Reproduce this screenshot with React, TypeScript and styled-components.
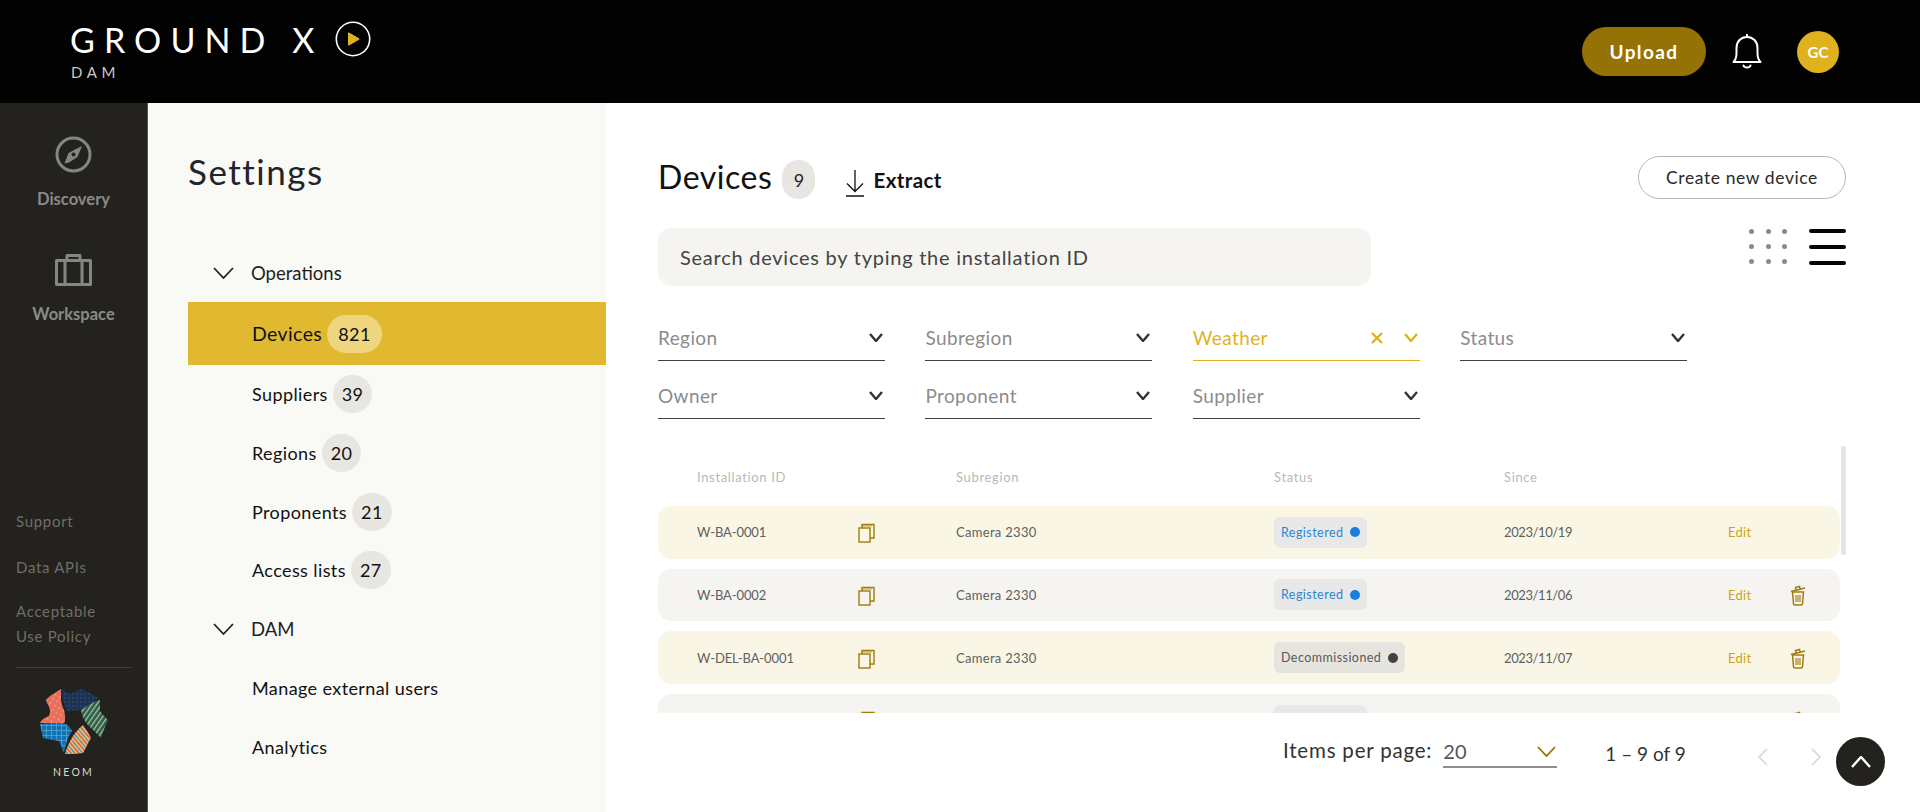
import { FC } from "react";
import styled, { createGlobalStyle } from "styled-components";

const GlobalStyle = createGlobalStyle`
	html, body {
		margin: 0;
		padding: 0;
		background: #fff;
		font-family: "Lato", "Noto Sans", sans-serif;
		overflow: hidden;
	}
	* { box-sizing: border-box; }
`;

const Page = styled.div`
	width: 1920px;
	height: 812px;
	display: flex;
	flex-direction: column;
	position: relative;
	overflow: hidden;
`;

const Header = styled.header`
	height: 103px;
	background: #020202;
	display: flex;
	align-items: center;
	justify-content: space-between;
	padding: 0 81px 0 70px;
	flex-shrink: 0;
`;

const Brand = styled.div`
	display: flex;
	flex-direction: column;
`;

const BrandTop = styled.div`
	display: flex;
	align-items: center;
	gap: 21px;
	height: 36px;
`;

const BrandName = styled.span`
	color: #fff;
	font-size: 34px;
	letter-spacing: 9.1px;
	margin-right: -9.1px;
	line-height: 36px;
`;

const PlayWrap = styled.span`
	display: flex;
	margin-bottom: 2px;
`;

const BrandSub = styled.span`
	color: #c9c9c9;
	font-size: 15px;
	letter-spacing: 4.6px;
	line-height: 18px;
	margin: 5px 0 0 1px;
`;

const HeaderActions = styled.div`
	display: flex;
	align-items: center;
`;

const UploadButton = styled.button`
	width: 124px;
	height: 49px;
	border: 0;
	border-radius: 25px;
	background: #957206;
	color: #fff;
	font: 700 19px "Lato", sans-serif;
	letter-spacing: 1.4px;
`;

const BellWrap = styled.span`
	display: flex;
	margin: 0 35px 0 26px;
`;

const Avatar = styled.span`
	width: 42px;
	height: 42px;
	border-radius: 50%;
	background: #dfb21d;
	color: #fff;
	font-weight: 700;
	font-size: 15px;
	display: flex;
	align-items: center;
	justify-content: center;
`;

const Body = styled.div`
	flex: 1;
	display: flex;
	min-height: 0;
`;

const Rail = styled.nav`
	width: 148px;
	background: #23221e;
	border-right: 1px solid #55544f;
	display: flex;
	flex-direction: column;
	align-items: stretch;
	flex-shrink: 0;
`;

const RailItem = styled.div<{ $top: number; $gap: number }>`
	display: flex;
	flex-direction: column;
	align-items: center;
	gap: ${(p) => p.$gap}px;
	margin-top: ${(p) => p.$top}px;
	color: #8a8a87;
	font-weight: 700;
	font-size: 16.5px;
	line-height: 18px;
`;

const RailLinks = styled.div`
	margin-top: auto;
	padding: 0 16px;
	display: flex;
	flex-direction: column;
	color: #6f6e69;
	font-size: 15px;
	letter-spacing: 0.7px;
`;

const RailLink = styled.span`
	margin-bottom: 21px;
	line-height: 25px;
	&:nth-child(2) { margin-bottom: 19px; }
	&:last-child { margin-bottom: 18px; }
`;

const RailDivider = styled.div`
	margin: 0 16px;
	border-top: 1px solid #3d3c37;
`;

const NeomBlock = styled.div`
	display: flex;
	flex-direction: column;
	align-items: center;
	padding: 20px 0 33px;
`;

const NeomText = styled.span`
	color: #d8d8d4;
	font-size: 10.5px;
	letter-spacing: 2.2px;
	margin-top: 11px;
	line-height: 13px;
`;

const SettingsPanel = styled.aside`
	width: 458px;
	background: #f9f9f5;
	padding-top: 46px;
	flex-shrink: 0;
`;

const SettingsTitle = styled.h1`
	margin: 0 0 50px 40px;
	font-size: 35px;
	line-height: 44px;
	font-weight: 400;
	letter-spacing: 1.5px;
	color: #22242b;
`;

const GroupRow = styled.div`
	display: flex;
	align-items: center;
	height: 59px;
	padding-left: 65px;
	gap: 17px;
	font-size: 18.5px;
	color: #1e1e1e;
`;

const MenuRow = styled.div<{ $active?: boolean }>`
	display: flex;
	align-items: center;
	height: ${(p) => (p.$active ? 63 : 58.7)}px;
	margin-left: 40px;
	padding-left: 64px;
	gap: 5px;
	font-size: ${(p) => (p.$active ? 19.5 : 18)}px;
	letter-spacing: 0.4px;
	color: #111;
	background: ${(p) => (p.$active ? "#e0b930" : "transparent")};
`;

const MenuCount = styled.span<{ $active?: boolean }>`
	min-width: 38px;
	height: 38px;
	padding: 0 ${(p) => (p.$active ? 11 : 9)}px;
	border-radius: 19px;
	background: ${(p) => (p.$active ? "#eed67f" : "#e8e6e1")};
	display: flex;
	align-items: center;
	justify-content: center;
	font-size: 18px;
`;

const Main = styled.main`
	flex: 1;
	padding: 53px 74px 0 52px;
	min-width: 0;
`;

const TitleRow = styled.div`
	display: flex;
	align-items: center;
	height: 43px;
`;

const PageTitle = styled.h2`
	margin: 0;
	font-weight: 400;
	font-size: 32px;
	letter-spacing: 0.55px;
	color: #111;
	line-height: 43px;
	position: relative;
	top: -1px;
`;

const TitleCount = styled.span`
	width: 33px;
	height: 39px;
	margin: 4px 0 0 10px;
	border-radius: 17px;
	background: #e8e6e1;
	display: flex;
	align-items: center;
	justify-content: center;
	font-size: 18px;
	color: #222;
`;

const ExtractLink = styled.span`
	display: flex;
	align-items: center;
	gap: 8px;
	margin: 4px 0 0 30px;
	font-size: 20.5px;
	font-weight: 700;
	letter-spacing: 0.4px;
	color: #111;
`;

const ExtractIcon = styled.span`
	display: flex;
	padding-top: 8px;
`;

const CreateButton = styled.button`
	margin-left: auto;
	width: 208px;
	height: 43px;
	border: 1px solid #b5b5b0;
	border-radius: 22px;
	background: #fff;
	font: 400 17.5px "Lato", sans-serif;
	letter-spacing: 0.6px;
	color: #2a2a2a;
`;

const SearchRow = styled.div`
	display: flex;
	justify-content: space-between;
	margin-top: 29px;
`;

const SearchBox = styled.div`
	width: 713px;
	height: 58px;
	border-radius: 13px;
	background: #f5f4f0;
	padding-left: 22px;
	display: flex;
	align-items: center;
	font-size: 20px;
	letter-spacing: 0.75px;
	color: #444;
`;

const ViewSwitch = styled.div`
	display: flex;
	gap: 22px;
	padding-top: 1px;
	height: 37px;
`;

const DotGrid = styled.div`
	display: grid;
	grid-template-columns: repeat(3, 5px);
	grid-template-rows: repeat(3, 5px);
	justify-content: space-between;
	align-content: space-between;
	width: 38px;
	height: 35px;
`;

const Dot = styled.span`
	width: 5px;
	height: 5px;
	border-radius: 50%;
	background: #8a8a8a;
`;

const Burger = styled.div`
	display: flex;
	flex-direction: column;
	justify-content: space-between;
	width: 37px;
	height: 36px;
`;

const BurgerLine = styled.span`
	height: 4px;
	border-radius: 2px;
	background: #050505;
`;

const Filters = styled.div`
	display: grid;
	grid-template-columns: repeat(4, 227px);
	column-gap: 40.4px;
	row-gap: 10px;
	margin-top: 27px;
`;

const FilterField = styled.div<{ $active?: boolean }>`
	height: 48px;
	display: flex;
	align-items: center;
	gap: 21px;
	padding: 2px 2px 0 0;
	border-bottom: 1px solid ${(p) => (p.$active ? "#dfb21d" : "#3f3f3f")};
	color: ${(p) => (p.$active ? "#dfb21d" : "#8c8c8c")};
	font-size: 19px;
	letter-spacing: 0.4px;
`;

const FilterLabel = styled.span`
	flex: 1;
`;

const TableArea = styled.div`
	position: relative;
	margin-top: 27px;
	height: 267px;
	overflow: hidden;
`;

const ScrollThumb = styled.span`
	position: absolute;
	right: 0;
	top: 0;
	width: 5px;
	height: 109px;
	border-radius: 3px;
	background: #e6e4df;
`;

const tableColumns = "161px 98px 318px 230px 224px 62px 1fr";

const TableHead = styled.div`
	display: grid;
	grid-template-columns: ${tableColumns};
	height: 60px;
	width: 1182px;
	padding: 24px 0 0 39px;
	font-size: 13px;
	line-height: 14px;
	letter-spacing: 0.65px;
	color: #b9b9b6;
`;

const HeadCell = styled.span<{ $span?: number }>`
	grid-column: span ${(p) => p.$span ?? 1};
`;

const Rows = styled.div`
	display: flex;
	flex-direction: column;
	gap: 10px;
	width: 1182px;
`;

const Row = styled.div<{ $tone: "cream" | "grey" }>`
	display: grid;
	grid-template-columns: ${tableColumns};
	align-items: center;
	height: 52.67px;
	flex-shrink: 0;
	padding-left: 39px;
	border-radius: 13px;
	background: ${(p) => (p.$tone === "cream" ? "#f9f6e6" : "#f5f4f0")};
	font-size: 13px;
	letter-spacing: 0.3px;
	color: #5f5f5f;
`;

const CodeCell = styled.span`
	letter-spacing: -0.1px;
`;

const DateCell = styled.span`
	letter-spacing: -0.4px;
`;

const IconCell = styled.span`
	display: flex;
	align-items: center;
	padding-top: 2px;
`;

const EditLink = styled.span`
	color: #c9a521;
	font-size: 13px;
`;

const StatusPill = styled.span<{ $kind: "registered" | "decommissioned" }>`
	display: inline-flex;
	align-items: center;
	justify-content: space-between;
	justify-self: start;
	gap: 7px;
	min-width: 93px;
	height: 31px;
	padding: 0 7px;
	border-radius: 6px;
	font-size: 12.5px;
	letter-spacing: 0.45px;
	background: ${(p) => (p.$kind === "registered" ? "#e9e8e8" : "#e6e4df")};
	color: ${(p) => (p.$kind === "registered" ? "#2a86d6" : "#5a5a5a")};
`;

const StatusDot = styled.span<{ $kind: "registered" | "decommissioned" }>`
	width: 10px;
	height: 10px;
	border-radius: 50%;
	background: ${(p) => (p.$kind === "registered" ? "#1a7fdc" : "#444240")};
`;

const Footer = styled.div`
	display: flex;
	align-items: center;
	height: 74px;
	padding-left: 625px;
	font-size: 20.5px;
	color: #333;
	letter-spacing: 0.8px;
`;

const PerPageSelect = styled.div`
	width: 114px;
	height: 32px;
	margin: 0 0 0 11px;
	border-bottom: 2px solid #909090;
	display: flex;
	align-items: center;
	justify-content: space-between;
	padding-right: 1px;
	position: relative;
	top: 2px;
	font-size: 20px;
	letter-spacing: 0;
	color: #555;
`;

const RangeText = styled.span`
	margin-left: 48px;
	font-size: 19px;
	letter-spacing: 0;
	position: relative;
	top: 3px;
`;

const PagerArrows = styled.div`
	display: flex;
	gap: 43px;
	margin-left: 72px;
	position: relative;
	top: 7px;
`;

const BackToTop = styled.button`
	position: absolute;
	right: 35px;
	bottom: 26px;
	width: 49px;
	height: 49px;
	border: 0;
	border-radius: 50%;
	background: #23221e;
	display: flex;
	align-items: center;
	justify-content: center;
	padding: 0;
`;

const Chevron: FC<{ size?: number; height?: number; color?: string; stroke?: number; dir?: "down" | "up" | "left" | "right" }> = ({
	size = 14,
	height = 9,
	color = "#333",
	stroke = 2.4,
	dir = "down",
}) => {
	const pts =
		dir === "down"
			? `1,1 ${size / 2},${height - 1} ${size - 1},1`
			: dir === "up"
			? `1,${height - 1} ${size / 2},1 ${size - 1},${height - 1}`
			: dir === "left"
			? `${size - 1},1 1,${height / 2} ${size - 1},${height - 1}`
			: `1,1 ${size - 1},${height / 2} 1,${height - 1}`;
	return (
		<svg width={size} height={height} viewBox={`0 0 ${size} ${height}`} fill="none">
			<polyline points={pts} stroke={color} strokeWidth={stroke} />
		</svg>
	);
};

const PlayMark = () => (
	<svg width="36" height="36" viewBox="0 0 36 36" fill="none">
		<circle cx="18" cy="18" r="16.7" stroke="#fff" strokeWidth="1.6" />
		<path d="M13 12.5a1 1 0 0 1 1.5-.8l9.5 5.5a1 1 0 0 1 0 1.6l-9.5 5.5a1 1 0 0 1-1.5-.8z" fill="#e0b120" />
	</svg>
);

const BellIcon = () => (
	<svg width="30" height="37" viewBox="0 0 30 37" fill="none" stroke="#fff" strokeWidth="2" strokeLinejoin="round">
		<path d="M15 1v3" />
		<path d="M1.5 29c2.5-2.5 3-5 3-9v-5c0-6.500 4.500-11 10.500-11s10.500 4.500 10.500 11v5c0 4 .5 6.500 3 9z" />
		<path d="M11.500 32.500c.8 2.600 6.200 2.600 7 0" strokeLinecap="round" />
	</svg>
);

const CompassIcon = () => (
	<svg width="37" height="37" viewBox="0 0 37 37" fill="none">
		<circle cx="18.500" cy="18.500" r="16.500" stroke="#858583" strokeWidth="3" />
		<path d="M27 10l-4.500 11-8.500 5.500-4.500 1 4-10.500z" fill="#858583" />
		<circle cx="18.500" cy="18.500" r="2" fill="#23221e" />
	</svg>
);

const BriefcaseIcon = () => (
	<svg width="37" height="32" viewBox="0 0 37 32" fill="none" stroke="#858583" strokeWidth="3" strokeLinejoin="round">
		<rect x="1.500" y="6.500" width="34" height="24" />
		<path d="M12 6.500v-5h13v5M10 6.500v24M27 6.500v24" />
	</svg>
);

const DownloadIcon = () => (
	<svg width="20" height="27" viewBox="0 0 20 27" fill="none" stroke="#111" strokeWidth="1.3">
		<path d="M10 0v21M2 13.500l8 8 8-8M1 26h18" />
	</svg>
);

const CopyIcon = () => (
	<svg width="17" height="20" viewBox="0 0 17 20" fill="none" stroke="#a07d0a" strokeWidth="1.4">
		<rect x="1" y="5" width="11" height="14" />
		<path d="M4 5V1.500h12v13.500h-4" />
		<path d="M4 4V3h10" strokeWidth="0.7" />
	</svg>
);

const TrashIcon = () => (
	<svg width="16" height="21" viewBox="0 0 16 21" fill="none" stroke="#a07d0a" strokeWidth="1.5">
		<path d="M1 6.500l14-3.500M6 4.500L5.500 2.500l4-1 .5 2" />
		<path d="M2.500 7l1 11.500a1.500 1.500 0 0 0 1.500 1.500h6a1.500 1.500 0 0 0 1.500-1.500l1-11.500z" />
		<path d="M6 10v7M8 10v7M10 10v7" strokeWidth="1.1" />
	</svg>
);

const NeomLogo = () => (
	<svg width="69" height="67" viewBox="0 0 69 67">
		<defs>
			<pattern id="coral" width="5" height="5" patternUnits="userSpaceOnUse" patternTransform="rotate(30)">
				<rect width="5" height="5" fill="#e8705a" />
				<circle cx="2.500" cy="2.500" r="1" fill="#f0a08a" />
			</pattern>
			<pattern id="navy" width="4" height="4" patternUnits="userSpaceOnUse">
				<rect width="4" height="4" fill="#1b3350" />
				<circle cx="2" cy="2" r=".7" fill="#3d5f82" />
			</pattern>
			<pattern id="leaf" width="4" height="4" patternUnits="userSpaceOnUse" patternTransform="rotate(35)">
				<rect width="4" height="4" fill="#2e5b46" />
				<rect width="1.300" height="4" fill="#a5c4a9" />
			</pattern>
			<pattern id="check" width="5" height="5" patternUnits="userSpaceOnUse">
				<rect width="5" height="5" fill="#1273b4" />
				<path d="M2.500 0v5M0 2.500h5" stroke="#5ea8d8" strokeWidth=".7" />
			</pattern>
			<pattern id="rainbow" width="6" height="6" patternUnits="userSpaceOnUse" patternTransform="rotate(-40)">
				<rect width="6" height="6" fill="#e8c9a0" />
				<rect width="1.500" height="6" fill="#d9583f" />
				<rect x="3" width="1" height="6" fill="#3d7fa8" />
				<rect x="4.500" width="1" height="6" fill="#e0b120" />
			</pattern>
		</defs>
		<path d="M22 1C16 5 10 8 7 12c1 4 4 7 4 11 0 4-1 5-3 6-3 1-6 3-7 6h21c2 0 4 0 4-2 0-4 0-8-1-11-2-4-3-9-3-10z" fill="url(#coral)" />
		<path d="M22 1c3 1 6 3 9 5 4-2 7-4 11-5 6 2 12 5 17 9-3 5-6 9-10 10-3 1-5 2-8 2-5 0-9 1-14 1-1-6-4-10-5-22z" fill="url(#navy)" />
		<path d="M61 12c-7 2-13 6-19 10 1 6 4 12 7 15 4 4 9 9 13 13 2-6 4-12 7-18-3-3-6-6-8-9z" fill="url(#leaf)" />
		<path d="M1 36c8-1 16-1 23-1 4 1 7 4 9 8-3 4-5 9-6 14-1 3-2 6-2 8-2-4-3-9-5-12-6-1-11-2-16-3-1-5-2-10-3-14z" fill="url(#check)" />
		<path d="M44 37c-5 4-10 10-13 16-2 4-4 9-5 13 6 0 12 0 18-1 3-5 5-10 8-15-2-4-5-9-8-13z" fill="url(#rainbow)" />
	</svg>
);

type DeviceRow = {
	id: string;
	subregion: string;
	status: "registered" | "decommissioned";
	statusLabel: string;
	since: string;
	edit: string;
	canDelete: boolean;
};

// the last row is scrolled under the footer, only its shapes show
const devices: DeviceRow[] = [
	{ id: "W-BA-0001", subregion: "Camera 2330", status: "registered", statusLabel: "Registered", since: "2023/10/19", edit: "Edit", canDelete: false },
	{ id: "W-BA-0002", subregion: "Camera 2330", status: "registered", statusLabel: "Registered", since: "2023/11/06", edit: "Edit", canDelete: true },
	{ id: "W-DEL-BA-0001", subregion: "Camera 2330", status: "decommissioned", statusLabel: "Decommissioned", since: "2023/11/07", edit: "Edit", canDelete: true },
	{ id: "", subregion: "", status: "registered", statusLabel: "", since: "", edit: "", canDelete: true },
];

const filters = ["Region", "Subregion", "Weather", "Status", "Owner", "Proponent", "Supplier"];

const menu = [
	{ label: "Devices", count: 821, active: true },
	{ label: "Suppliers", count: 39 },
	{ label: "Regions", count: 20 },
	{ label: "Proponents", count: 21 },
	{ label: "Access lists", count: 27 },
];

export default function App() {
	return (
		<Page>
			<GlobalStyle />
			<Header>
				<Brand>
					<BrandTop>
						<BrandName>GROUND X</BrandName>
						<PlayWrap><PlayMark /></PlayWrap>
					</BrandTop>
					<BrandSub>DAM</BrandSub>
				</Brand>
				<HeaderActions>
					<UploadButton>Upload</UploadButton>
					<BellWrap><BellIcon /></BellWrap>
					<Avatar>GC</Avatar>
				</HeaderActions>
			</Header>
			<Body>
				<Rail>
					<RailItem $top={33} $gap={17}><CompassIcon />Discovery</RailItem>
					<RailItem $top={46} $gap={19}><BriefcaseIcon />Workspace</RailItem>
					<RailLinks>
						<RailLink>Support</RailLink>
						<RailLink>Data APIs</RailLink>
						<RailLink>Acceptable<br />Use Policy</RailLink>
					</RailLinks>
					<RailDivider />
					<NeomBlock>
						<NeomLogo />
						<NeomText>NEOM</NeomText>
					</NeomBlock>
				</Rail>
				<SettingsPanel>
					<SettingsTitle>Settings</SettingsTitle>
					<GroupRow><Chevron size={21} height={12} color="#222" stroke={1.8} />Operations</GroupRow>
					{menu.map((m) => (
						<MenuRow key={m.label} $active={m.active}>
							{m.label}
							<MenuCount $active={m.active}>{m.count}</MenuCount>
						</MenuRow>
					))}
					<GroupRow><Chevron size={21} height={12} color="#222" stroke={1.8} />DAM</GroupRow>
					<MenuRow>Manage external users</MenuRow>
					<MenuRow>Analytics</MenuRow>
				</SettingsPanel>
				<Main>
					<TitleRow>
						<PageTitle>Devices</PageTitle>
						<TitleCount>9</TitleCount>
						<ExtractLink><ExtractIcon><DownloadIcon /></ExtractIcon>Extract</ExtractLink>
						<CreateButton>Create new device</CreateButton>
					</TitleRow>
					<SearchRow>
						<SearchBox>Search devices by typing the installation ID</SearchBox>
						<ViewSwitch>
							<DotGrid>
								{Array.from({ length: 9 }).map((_, i) => <Dot key={i} />)}
							</DotGrid>
							<Burger>
								<BurgerLine />
								<BurgerLine />
								<BurgerLine />
							</Burger>
						</ViewSwitch>
					</SearchRow>
					<Filters>
						{filters.map((f) => {
							const active = f === "Weather";
							return (
								<FilterField key={f} $active={active}>
									<FilterLabel>{f}</FilterLabel>
									{active && (
										<svg width="12" height="12" viewBox="0 0 12 12" stroke="#dfb21d" strokeWidth="2.4">
											<path d="M1 1l10 10M11 1L1 11" />
										</svg>
									)}
									<Chevron color={active ? "#dfb21d" : "#333"} />
								</FilterField>
							);
						})}
					</Filters>
					<TableArea>
						<TableHead>
							<HeadCell $span={2}>Installation ID</HeadCell>
							<HeadCell>Subregion</HeadCell>
							<HeadCell>Status</HeadCell>
							<HeadCell>Since</HeadCell>
						</TableHead>
						<Rows>
							{devices.map((d, i) => (
								<Row key={i} $tone={i % 2 === 0 ? "cream" : "grey"}>
									<CodeCell>{d.id}</CodeCell>
									<IconCell><CopyIcon /></IconCell>
									<span>{d.subregion}</span>
									<StatusPill $kind={d.status}>
										{d.statusLabel}
										<StatusDot $kind={d.status} />
									</StatusPill>
									<DateCell>{d.since}</DateCell>
									<EditLink>{d.edit}</EditLink>
									<IconCell>{d.canDelete && <TrashIcon />}</IconCell>
								</Row>
							))}
						</Rows>
						<ScrollThumb />
					</TableArea>
					<Footer>
						Items per page:
						<PerPageSelect>
							20
							<Chevron size={19} height={11} color="#957206" stroke={1.8} />
						</PerPageSelect>
						<RangeText>1 – 9 of 9</RangeText>
						<PagerArrows>
							<Chevron dir="left" size={10} height={18} color="#dcdcd8" stroke={1.8} />
							<Chevron dir="right" size={10} height={18} color="#dcdcd8" stroke={1.8} />
						</PagerArrows>
					</Footer>
				</Main>
			</Body>
			<BackToTop aria-label="Back to top">
				<Chevron dir="up" size={20} height={12} color="#fff" stroke={2.4} />
			</BackToTop>
		</Page>
	);
}
